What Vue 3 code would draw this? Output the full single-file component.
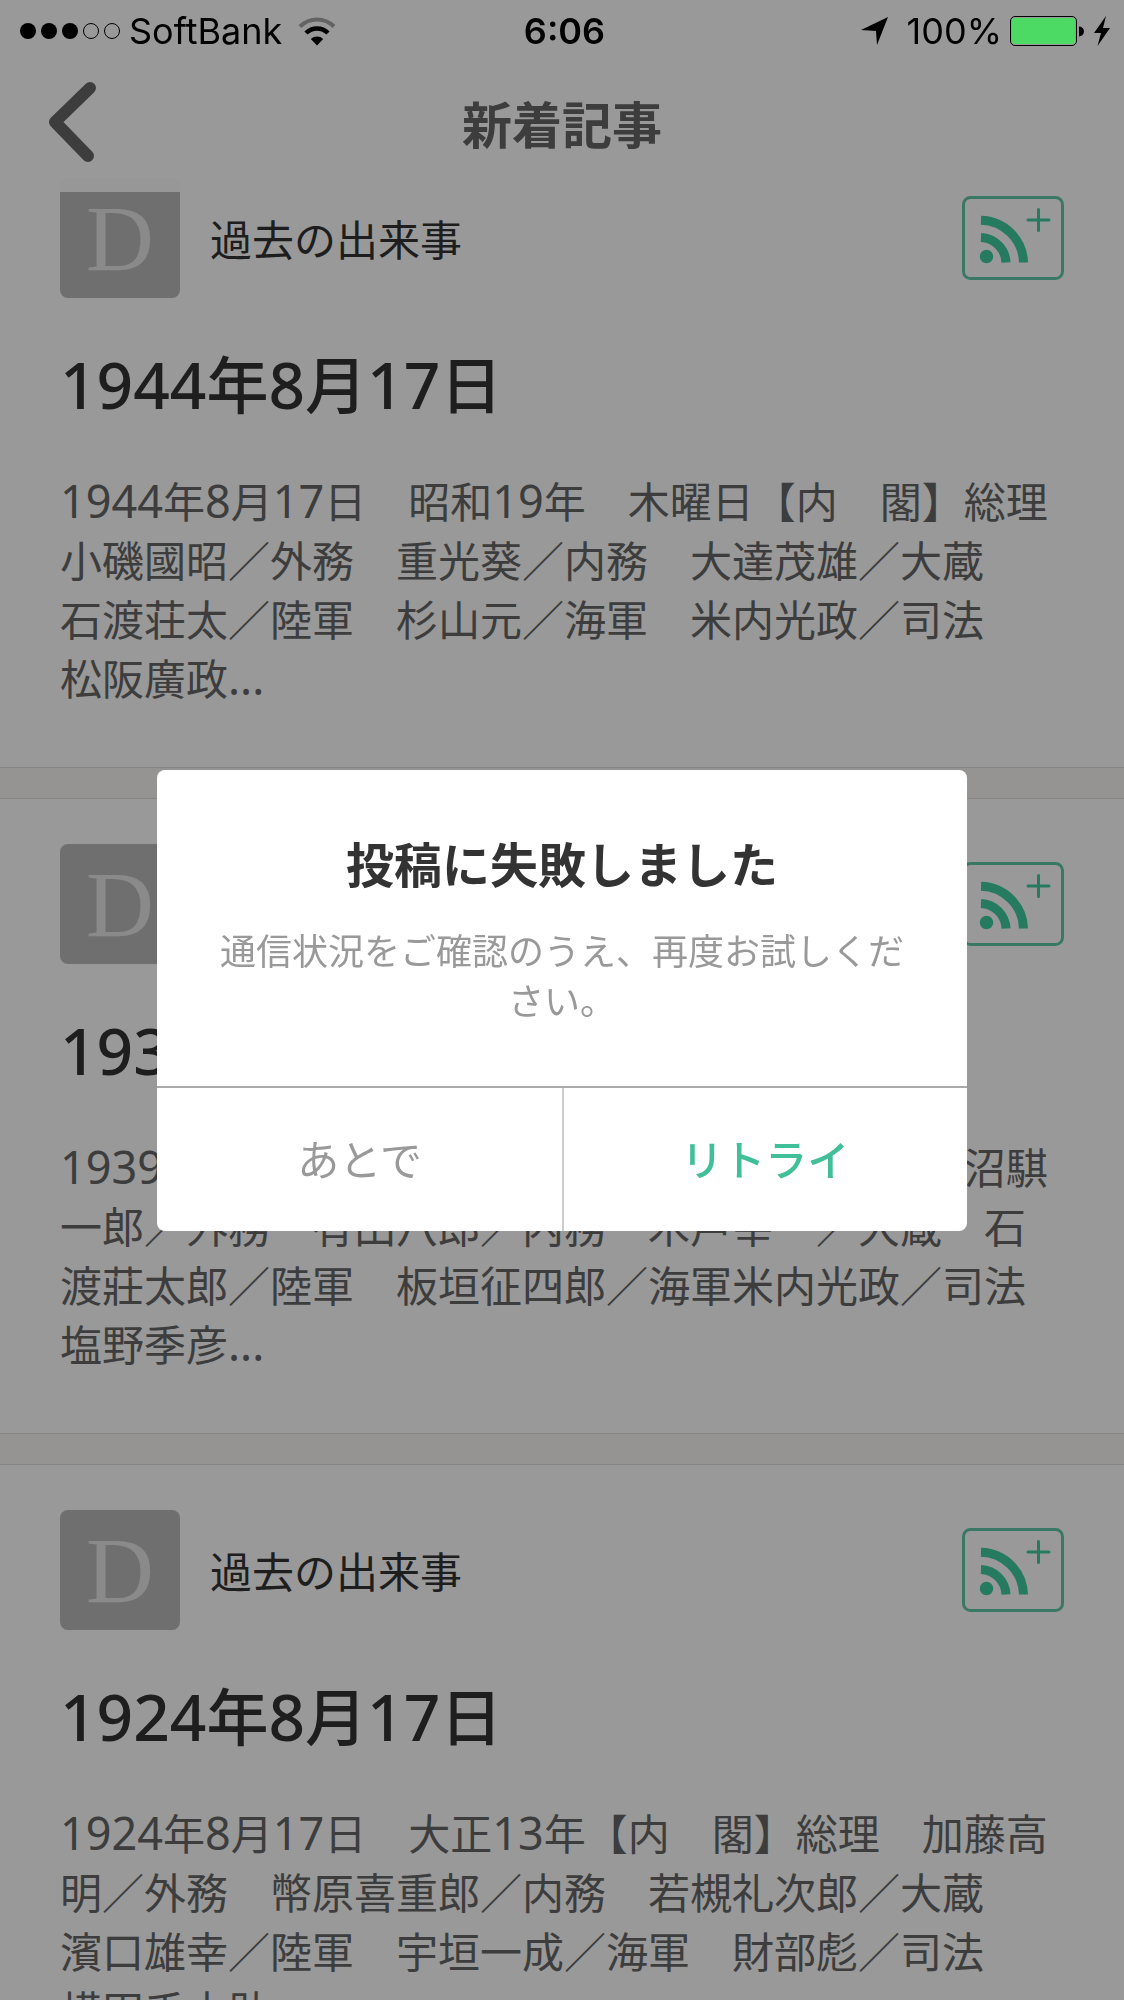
<script setup>
const articles = [
  {
    id: 1,
    source: '過去の出来事',
    title: '1944年8月17日',
    body: '1944年8月17日　昭和19年　木曜日【内　閣】総理\n小磯國昭／外務　重光葵／内務　大達茂雄／大蔵\n石渡荘太／陸軍　杉山元／海軍　米内光政／司法\n松阪廣政...',
  },
  {
    id: 2,
    source: '過去の出来事',
    title: '1939年8月17日',
    body: '1939年8月17日　昭和14年【内　閣】総理　平沼騏\n一郎／外務　有田八郎／内務　木戸幸一／大蔵　石\n渡莊太郎／陸軍　板垣征四郎／海軍米内光政／司法\n塩野季彦...',
  },
  {
    id: 3,
    source: '過去の出来事',
    title: '1924年8月17日',
    body: '1924年8月17日　大正13年【内　閣】総理　加藤高\n明／外務　幣原喜重郎／内務　若槻礼次郎／大蔵\n濱口雄幸／陸軍　宇垣一成／海軍　財部彪／司法\n横田千之助...',
  },
]

// Split a string into Latin runs (digits, dots) and Japanese runs.
const runs = (text) =>
  text
    .split(/([0-9.]+)/)
    .filter(Boolean)
    .map((part) => ({ part, latin: /^[0-9.]/.test(part) }))
</script>

<template>
  <div class="screen">
    <div class="status">
      <div class="status-left">
        <svg class="signal" width="102" height="18" viewBox="0 0 102 18" aria-hidden="true">
          <circle cx="9" cy="9" r="8" />
          <circle cx="30" cy="9" r="8" />
          <circle cx="51" cy="9" r="8" />
          <circle class="hollow" cx="72" cy="9" r="7.5" />
          <circle class="hollow" cx="93" cy="9" r="7.5" />
        </svg>
        <span>SoftBank</span>
        <svg class="wifi" width="38" height="30" viewBox="0 0 38 30" aria-hidden="true">
          <path d="M2 10.500A24 24 0 0 1 36 10.500" stroke-width="4" opacity=".35" />
          <path d="M8 17A15.500 15.500 0 0 1 30 17" stroke-width="4.500" />
          <path class="solid" d="M19 29.500L12.800 23A9 9 0 0 1 25.200 23Z" />
        </svg>
      </div>
      <strong class="time">6:06</strong>
      <div class="status-right">
        <svg width="28" height="28" viewBox="0 0 28 28" aria-hidden="true">
          <path d="M27 0L16 28L15 14L0 13Z" />
        </svg>
        <span class="percent">100%</span>
        <svg width="74" height="30" viewBox="0 0 74 30" aria-hidden="true">
          <rect x="0.500" y="0.500" width="66" height="29" rx="4.500" fill="none" stroke="#000" />
          <rect x="2" y="2" width="63" height="26" rx="3" fill="#4cd964" />
          <path d="M69 10.500A5 5 0 0 1 69 20.500Z" />
        </svg>
        <svg class="bolt" width="16" height="30" viewBox="0 0 16 30" aria-hidden="true">
          <path d="M12 0L0 17H7L3.500 30L16 12H9Z" />
        </svg>
      </div>
    </div>

    <header class="navbar">
      <button class="back" type="button" aria-label="戻る">
        <svg width="50" height="82" viewBox="0 0 50 82" aria-hidden="true">
          <path d="M42 7L7 41L40 75" />
        </svg>
      </button>
      <h1>新着記事</h1>
    </header>

    <main class="feed">
      <article v-for="a in articles" :key="a.id" class="card">
        <div class="source">
          <span class="avatar" aria-hidden="true">D</span>
          <span class="name">{{ a.source }}</span>
          <button class="subscribe" type="button" aria-label="購読する">
            <svg width="102" height="84" viewBox="0 0 102 84" aria-hidden="true">
              <rect x="1.500" y="1.500" width="99" height="81" rx="7" fill="none" stroke-width="3" />
              <circle cx="24.500" cy="60.500" r="6.700" />
              <path d="M19 24.200A43.500 43.500 0 0 1 61.500 66.500" />
              <path d="M19 41.500A26 26 0 0 1 44 66.500" />
              <path class="plus" d="M66 24H87M76.500 13.500V34.500" />
            </svg>
          </button>
        </div>
        <h2><span v-for="(r, i) in runs(a.title)" :key="i" :class="{ latin: r.latin }">{{ r.part }}</span></h2>
        <p><span v-for="(r, i) in runs(a.body)" :key="i" :class="{ latin: r.latin }">{{ r.part }}</span></p>
      </article>
    </main>

    <div class="backdrop">
      <section class="dialog" role="alertdialog" aria-labelledby="dialog-title" aria-describedby="dialog-text">
        <div class="message">
          <h2 id="dialog-title">投稿に失敗しました</h2>
          <p id="dialog-text">通信状況をご確認のうえ、再度お試しください。</p>
        </div>
        <div class="actions">
          <button type="button">あとで</button>
          <button type="button" class="primary">リトライ</button>
        </div>
      </section>
    </div>
  </div>
</template>

<style>
body {
  margin: 0;
  background: #fff;
}
</style>

<style scoped>
.screen {
  height: 100vh;
  overflow: hidden;
  color: #333;
  font-family: "Noto Sans CJK JP", sans-serif;
}

h1,
h2,
p {
  margin: 0;
}

button {
  padding: 0;
  border: 0;
  background: none;
  font-family: inherit;
  cursor: pointer;
}

svg {
  display: block;
  flex: none;
}

/* Status bar stays above the backdrop */
.status {
  position: relative;
  z-index: 3;
  display: grid;
  grid-template-columns: 1fr auto 1fr;
  align-items: center;
  height: 60px;
  padding: 0 14px 0 19px;
  color: #000;
  font-family: Inter, sans-serif;
  font-size: 36px;
  line-height: 62px;
}

.status-left,
.status-right {
  display: flex;
  align-items: center;
}

.status-left {
  gap: 8px;
}

.status-right {
  justify-content: flex-end;
}

.hollow {
  fill: none;
  stroke: #000;
}

.wifi {
  margin-left: 8px;
  fill: none;
  stroke: #000;
}

.wifi .solid {
  fill: #000;
  stroke: none;
}

.time {
  font-weight: 600;
}

.percent {
  margin: 0 8px 0 18px;
}

.bolt {
  margin-left: 10px;
}

.navbar {
  position: relative;
  z-index: 1;
  display: grid;
  grid-template-columns: 1fr auto 1fr;
  align-items: center;
  box-sizing: border-box;
  height: 192px;
  margin-top: -60px;
  padding: 60px 48px 8px;
  background: rgba(255, 255, 255, 0.96);
}

.navbar h1 {
  color: #666;
  font-size: 50px;
  font-weight: 700;
  line-height: 72px;
}

.back {
  justify-self: start;
}

.back path {
  fill: none;
  stroke: #666;
  stroke-width: 12;
  stroke-linecap: round;
  stroke-linejoin: round;
}

/* Scrolled so that the first card slides under the navbar */
.feed {
  margin-top: -60px;
  background: #f9f7f4;
}

.card {
  padding: 45px 60px 61px;
  margin-bottom: 30px;
  border-top: 1px solid #e2dede;
  border-bottom: 1px solid #e2dede;
  background: #fff;
}

.source {
  display: flex;
  align-items: center;
  gap: 30px;
}

.avatar {
  width: 120px;
  height: 120px;
  border-radius: 8px;
  background: #bababa;
  color: #e6e6e6;
  font-family: "Liberation Serif", serif;
  font-size: 94px;
  line-height: 120px;
  text-align: center;
}

.name {
  flex: 1;
  font-size: 42px;
  line-height: 60px;
}

.subscribe svg {
  fill: #3fcb9f;
  stroke: none;
}

.subscribe rect {
  stroke: #5fc8a8;
}

.subscribe path {
  fill: none;
  stroke: #3fcb9f;
  stroke-width: 9;
}

.subscribe .plus {
  stroke-width: 3;
  stroke-linecap: round;
}

.card h2 {
  margin-top: 48px;
  font-size: 62px;
  font-weight: 500;
  line-height: 72px;
}

.card h2 .latin {
  font-family: "Noto Sans", sans-serif;
  font-size: 64px;
  font-weight: 500;
  line-height: 1;
}

.card p {
  margin-top: 52px;
  color: #666;
  font-size: 42px;
  line-height: 59px;
  white-space: pre-wrap;
}

.card p .latin {
  font-family: "Noto Sans", sans-serif;
  font-size: 45px;
  line-height: 1;
}

.backdrop {
  position: fixed;
  inset: 0;
  z-index: 2;
  display: grid;
  place-items: center;
  background: rgba(0, 0, 0, 0.4);
}

.dialog {
  width: 72%;
  border-radius: 8px;
  background: #fff;
  overflow: hidden;
}

.message {
  padding: 62px 54px;
  border-bottom: 2px solid #aaa;
  text-align: center;
}

.message h2 {
  font-size: 48px;
  font-weight: 700;
  line-height: 60px;
}

.message p {
  margin-top: 32px;
  color: #999;
  font-size: 36px;
  line-height: 50px;
}

.actions {
  display: grid;
  grid-template-columns: 1fr 1fr;
}

.actions button {
  height: 143px;
  padding-bottom: 4px;
  color: #999;
  font-size: 42px;
}

.actions .primary {
  border-left: 2px solid #ccc;
  color: #40bf99;
  font-weight: 500;
}
</style>
